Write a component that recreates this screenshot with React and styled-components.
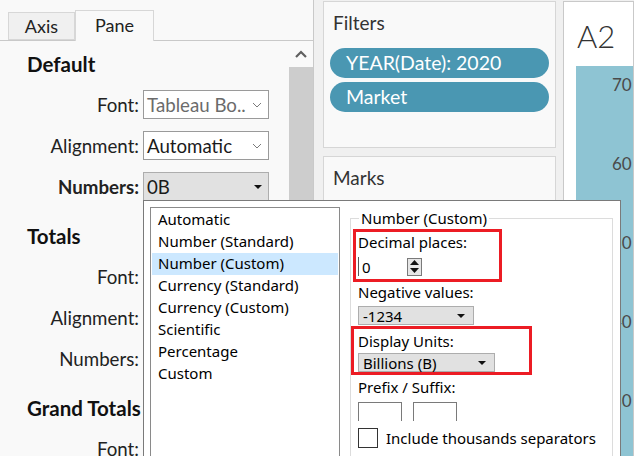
import React from "react";
import styled, { createGlobalStyle } from "styled-components";

const GlobalStyle = createGlobalStyle`
  html, body {
    margin: 0;
    padding: 0;
    width: 634px;
    height: 456px;
    overflow: hidden;
    background: #f0f0f0;
  }
  * { box-sizing: border-box; }
`;

const Page = styled.div`
  position: relative;
  display: flex;
  align-items: flex-start;
  width: 634px;
  height: 456px;
  overflow: hidden;
  background: #f0f0f0;
  font-family: Lato, "Open Sans", sans-serif;
  color: #1a1a1a;
`;

/* ---------- left format pane ---------- */
const LeftPane = styled.div`
  width: 314px;
  height: 456px;
  flex-shrink: 0;
  background: #f9f9f9;
  border-right: 1px solid #c9c9c9;
  display: flex;
  flex-direction: column;
`;

const TabBar = styled.div`
  height: 41px;
  display: flex;
  align-items: flex-end;
  padding-left: 8px;
  border-bottom: 1px solid #c9c9c9;
`;

const Tab = styled.div`
  height: ${(p) => (p.$active ? 31 : 28)}px;
  width: ${(p) => p.$w}px;
  margin-bottom: ${(p) => (p.$active ? -1 : 0)}px;
  background: ${(p) => (p.$active ? "#f9f9f9" : "#f0f0f0")};
  border: 1px solid #d7d7d7;
  border-bottom: ${(p) => (p.$active ? "none" : "1px solid #d7d7d7")};
  display: flex;
  align-items: center;
  justify-content: center;
  font-size: 18px;
  color: #222;
  padding-bottom: ${(p) => (p.$active ? 2 : 0)}px;
`;

const PaneBody = styled.div`
  flex: 1;
  display: flex;
  min-height: 0;
`;

const FormArea = styled.div`
  flex: 1;
  padding-top: 11px;
  display: flex;
  flex-direction: column;
  gap: 23px;
  overflow: hidden;
`;

const Section = styled.div`
  display: flex;
  flex-direction: column;
  gap: 12px;
`;

const SectionTitle = styled.div`
  height: 24px;
  line-height: 24px;
  padding-left: 27px;
  font-size: 20.5px;
  font-weight: 700;
  color: #111;
  white-space: nowrap;
  margin-bottom: 2px;
`;

const Row = styled.div`
  display: grid;
  grid-template-columns: 139px 126px;
  column-gap: 4px;
  align-items: center;
  height: 29px;
`;

const Label = styled.div`
  text-align: right;
  font-size: 18.7px;
  font-weight: ${(p) => (p.$bold ? 700 : 400)};
  color: #222;
  white-space: nowrap;
`;

const PaneSelect = styled.div`
  height: 29px;
  border: 1px solid ${(p) => (p.$filled ? "#adadad" : "#9a9a9a")};
  background: ${(p) => (p.$filled ? "#e1e1e1" : "#ffffff")};
  display: flex;
  align-items: center;
  justify-content: space-between;
  padding: 0 6px 0 3px;
  font-size: 18.7px;
  color: ${(p) => (p.$muted ? "#6b6b6b" : "#1a1a1a")};
  white-space: nowrap;
  overflow: hidden;
`;

const Scrollbar = styled.div`
  width: 24px;
  display: flex;
  flex-direction: column;
`;

const ScrollUp = styled.div`
  height: 26px;
  display: flex;
  align-items: center;
  justify-content: center;
`;

const ScrollThumb = styled.div`
  flex: 1;
  background: #cdcdcd;
`;

/* ---------- shelves ---------- */
const Shelves = styled.div`
  width: 233px;
  margin-left: 9px;
  margin-top: 1px;
  display: flex;
  flex-direction: column;
  gap: 8px;
  flex-shrink: 0;
  height: 470px;
`;

const Card = styled.div`
  height: ${(p) => (p.$h ? `${p.$h}px` : "auto")};
  flex: ${(p) => (p.$grow ? 1 : "none")};
  background: #f9f9f9;
  border: 1px solid #d6d6d6;
  padding: 0 6px;
  display: flex;
  flex-direction: column;
  gap: 4px;
`;

const CardTitle = styled.div`
  font-size: 19px;
  color: #333;
  padding-left: 3px;
  height: 46px;
  line-height: 42px;
  margin-bottom: -4px;
`;

const Pill = styled.div`
  height: 30px;
  border-radius: 15px;
  background: #4a97b2;
  color: #fff;
  font-size: 19.5px;
  line-height: 30px;
  padding-left: 16px;
  white-space: nowrap;
`;

/* ---------- sheet ---------- */
const Sheet = styled.div`
  flex: 1;
  margin-left: 7px;
  margin-top: 1px;
  height: 470px;
  background: #fff;
  border: 1px solid #c9c9c9;
  padding-left: 12px;
  display: flex;
  flex-direction: column;
`;

const SheetTitle = styled.div`
  height: 64px;
  line-height: 68px;
  padding-left: 1px;
  font-size: 31px;
  font-weight: 300;
  color: #333;
`;

const Chart = styled.div`
  flex: 1;
  background: #8ec4d3;
  padding: 9px 0 0 36px;
  display: flex;
  flex-direction: column;
  gap: 59px;
`;

const Tick = styled.div`
  height: 20px;
  line-height: 20px;
  font-size: 17px;
  color: #4a4a4a;
  white-space: nowrap;
`;

/* ---------- number format popup ---------- */
const Popup = styled.div`
  position: absolute;
  left: 143px;
  top: 200px;
  width: 478px;
  height: 280px;
  background: #fff;
  border: 1px solid #7a7a7a;
  padding: 6px 6px 0 6px;
  display: flex;
  gap: 10px;
  font-family: "Noto Sans", "DejaVu Sans", sans-serif;
  font-size: 15px;
  color: #000;
`;

const ListBox = styled.div`
  width: 190px;
  height: 270px;
  border: 1px solid #8a8a8a;
  padding: 1px 1px 0 1px;
  display: flex;
  flex-direction: column;
`;

const ListItem = styled.div`
  height: 22px;
  line-height: 21px;
  padding-left: 6px;
  background: ${(p) => (p.$selected ? "#cce8ff" : "transparent")};
  white-space: nowrap;
`;

const Group = styled.fieldset`
  margin: 1px 0 0 0;
  width: 263px;
  height: 270px;
  border: 1px solid #dcdcdc;
  padding: 1px 0 0 7px;
  display: flex;
  flex-direction: column;
`;

const Legend = styled.legend`
  padding: 0 2px;
  margin-left: 1px;
  line-height: 20px;
`;

const FieldLabel = styled.div`
  height: 20px;
  line-height: 20px;
  white-space: nowrap;
  margin-top: ${(p) => p.$mt || 0}px;
`;

const Highlight = styled.div`
  border: 3px solid #ec1c24;
  margin-left: ${(p) => p.$ml}px;
  margin-top: ${(p) => p.$mt || 0}px;
  width: ${(p) => p.$w}px;
  padding-left: ${(p) => -p.$ml - 3}px;
  padding-top: ${(p) => p.$pt}px;
  padding-bottom: ${(p) => p.$pb}px;
  display: flex;
  flex-direction: column;
  gap: ${(p) => p.$gap}px;
`;

const Spinner = styled.div`
  width: 64px;
  height: 19px;
  border-left: 1px solid #5a5a5a;
  display: flex;
  align-items: center;
  justify-content: space-between;
  padding-left: 3px;
`;

const SpinButtons = styled.div`
  width: 15px;
  height: 18px;
  border: 1px solid #7a7a7a;
  background: #e6e6e6;
  display: flex;
  flex-direction: column;
  align-items: center;
  justify-content: space-around;
`;

const DialogSelect = styled.div`
  width: ${(p) => p.$w}px;
  height: 19px;
  background: #e1e1e1;
  border: 1px solid #adadad;
  display: flex;
  align-items: center;
  justify-content: space-between;
  padding: 0 8px 0 4px;
  white-space: nowrap;
  margin-top: ${(p) => p.$mt || 0}px;
`;

const AffixRow = styled.div`
  display: flex;
  gap: 11px;
  margin-top: 5px;
`;

const AffixBox = styled.div`
  width: 44px;
  height: 19px;
  border: 1px solid #7a7a7a;
  border-bottom: none;
`;

const CheckRow = styled.div`
  display: flex;
  align-items: center;
  gap: 8px;
  margin-top: 7px;
  white-space: nowrap;
`;

const CheckBox = styled.div`
  width: 20px;
  height: 20px;
  border: 1px solid #333;
  background: #fff;
`;

const Chevron = ({ color = "#7a7a7a" }) => (
  <svg width="10" height="6" viewBox="0 0 10 6">
    <polyline points="1,1 5,5 9,1" fill="none" stroke={color} strokeWidth="1" />
  </svg>
);

const Caret = () => (
  <svg width="8" height="4" viewBox="0 0 8 4">
    <polygon points="0,0 8,0 4,4" fill="#111" />
  </svg>
);

const UpArrow = () => (
  <svg width="12" height="8" viewBox="0 0 12 8">
    <polyline points="1,7 6,2 11,7" fill="none" stroke="#606060" strokeWidth="2.2" />
  </svg>
);

const SpinArrow = ({ down }) => (
  <svg width="9" height="5" viewBox="0 0 9 5">
    <polygon points={down ? "0,0 9,0 4.5,5" : "0,5 9,5 4.5,0"} fill="#111" />
  </svg>
);

const formats = [
  "Automatic",
  "Number (Standard)",
  "Number (Custom)",
  "Currency (Standard)",
  "Currency (Custom)",
  "Scientific",
  "Percentage",
  "Custom",
];

const sections = [
  { title: "Default", rows: true },
  { title: "Totals", rows: true },
  { title: "Grand Totals", rows: false },
];

function PaneSection({ title, full }) {
  return (
    <Section>
      <SectionTitle>{title}</SectionTitle>
      <Row>
        <Label>Font:</Label>
        <PaneSelect $muted>
          Tableau Bo..
          <Chevron />
        </PaneSelect>
      </Row>
      {full && (
        <>
          <Row>
            <Label>Alignment:</Label>
            <PaneSelect>
              Automatic
              <Chevron />
            </PaneSelect>
          </Row>
          <Row>
            <Label $bold={title === "Default"}>Numbers:</Label>
            <PaneSelect $filled>
              0B
              <Caret />
            </PaneSelect>
          </Row>
        </>
      )}
    </Section>
  );
}

export default function App() {
  return (
    <>
      <GlobalStyle />
      <Page>
        <LeftPane>
          <TabBar>
            <Tab $w={67}>Axis</Tab>
            <Tab $w={79} $active>
              Pane
            </Tab>
          </TabBar>
          <PaneBody>
            <FormArea>
              {sections.map((s) => (
                <PaneSection key={s.title} title={s.title} full={s.rows} />
              ))}
            </FormArea>
            <Scrollbar>
              <ScrollUp>
                <UpArrow />
              </ScrollUp>
              <ScrollThumb />
            </Scrollbar>
          </PaneBody>
        </LeftPane>

        <Shelves>
          <Card $h={147}>
            <CardTitle>Filters</CardTitle>
            <Pill>YEAR(Date): 2020</Pill>
            <Pill>Market</Pill>
          </Card>
          <Card $grow>
            <CardTitle>Marks</CardTitle>
          </Card>
        </Shelves>

        <Sheet>
          <SheetTitle>A2</SheetTitle>
          <Chart>
            {["70", "60", "50", "40", "30"].map((t) => (
              <Tick key={t}>{t}</Tick>
            ))}
          </Chart>
        </Sheet>

        <Popup>
          <ListBox>
            {formats.map((f) => (
              <ListItem key={f} $selected={f === "Number (Custom)"}>
                {f}
              </ListItem>
            ))}
          </ListBox>
          <Group>
            <Legend>Number (Custom)</Legend>
            <Highlight $ml={-5} $w={149} $pt={0} $pb={3} $gap={5}>
              <FieldLabel>Decimal places:</FieldLabel>
              <Spinner>
                0
                <SpinButtons>
                  <SpinArrow />
                  <SpinArrow down />
                </SpinButtons>
              </Spinner>
            </Highlight>
            <FieldLabel>Negative values:</FieldLabel>
            <DialogSelect $w={116} $mt={4}>
              -1234
              <Caret />
            </DialogSelect>
            <Highlight $ml={-7} $w={181} $mt={1} $pt={2} $pb={0} $gap={2}>
              <FieldLabel>Display Units:</FieldLabel>
              <DialogSelect $w={137}>
                Billions (B)
                <Caret />
              </DialogSelect>
            </Highlight>
            <FieldLabel $mt={2}>Prefix / Suffix:</FieldLabel>
            <AffixRow>
              <AffixBox />
              <AffixBox />
            </AffixRow>
            <CheckRow>
              <CheckBox />
              Include thousands separators
            </CheckRow>
          </Group>
        </Popup>
      </Page>
    </>
  );
}
